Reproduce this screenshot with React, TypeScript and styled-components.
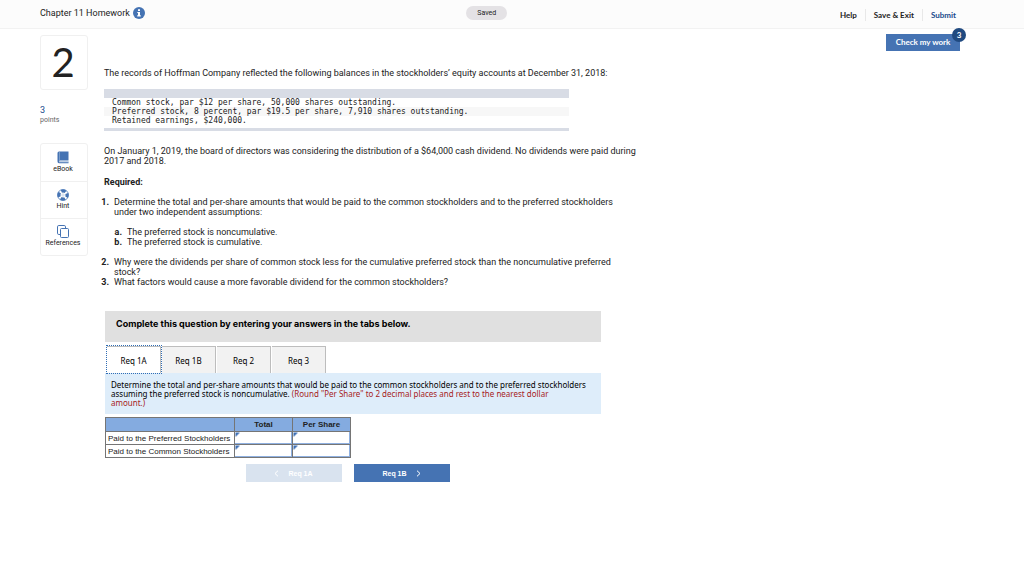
import React, { useState } from "react";
import styled, { createGlobalStyle } from "styled-components";

const GlobalStyle = createGlobalStyle`
  *, *::before, *::after { box-sizing: border-box; }
  body {
    margin: 0;
    background: #fff;
    color: #222;
    font-family: "Roboto", "Liberation Sans", sans-serif;
    font-size: 9px;
    line-height: 10px;
  }
  button { font: inherit; color: inherit; border: 0; padding: 0; cursor: pointer; }
  p, ol, pre { margin: 0; }
`;

const Header = styled.header`
  display: grid;
  grid-template-columns: 14fr auto 15fr;
  align-items: center;
  height: 29px;
  padding: 0 60px 2px 40px;
  background: #fcfcfc;
  border-bottom: 1px solid #f2f2f2;
`;
const Title = styled.h1`
  display: flex;
  align-items: center;
  gap: 3px;
  margin: 0;
  font-size: 9px;
  font-weight: 400;
`;
const InfoButton = styled.button`
  display: flex;
  background: none;
`;
const Saved = styled.span`
  width: 41px;
  border-radius: 7px;
  background: #e4e2e5;
  font-size: 7px;
  line-height: 14px;
  text-align: center;
`;
const Nav = styled.nav`
  display: flex;
  justify-content: flex-end;
  padding-top: 3px;
  font-family: "Lato", sans-serif;
`;
const NavLink = styled.a<{ $primary?: boolean }>`
  padding: 0 8px;
  border-left: 1px solid #e8e8e8;
  color: ${(p) => (p.$primary ? "#204a8b" : "#222")};
  font-size: 8px;
  font-weight: 700;
  line-height: 12px;
  text-decoration: none;
  &:first-child { border-left: 0; }
`;

const Page = styled.div`
  display: grid;
  grid-template-columns: 48px minmax(0, 1fr) auto;
  column-gap: 16px;
  padding: 5px 64px 24px 40px;
`;
const Side = styled.aside`
  display: flex;
  flex-direction: column;
  padding-top: 1px;
`;
const QuestionNumber = styled.div`
  border: 1px solid #f0f0f0;
  border-radius: 3px;
  padding-right: 2px;
  font-family: "Lato", sans-serif;
  font-size: 40px;
  line-height: 53px;
  text-align: center;
`;
const Points = styled.div`
  margin: 15px 0 18px;
  color: #666;
  font-size: 7px;
`;
const PointValue = styled.div`
  color: #204a8b;
  font-size: 9px;
`;
const Tools = styled.div`
  border: 1px solid #f0f0f0;
  border-radius: 3px;
`;
const Tool = styled.button`
  display: flex;
  flex-direction: column;
  align-items: center;
  justify-content: center;
  width: 100%;
  height: 37px;
  padding: 0 2px 1px 0;
  background: none;
  font-size: 7px;
  & + & { border-top: 1px solid #f0f0f0; }
`;

const Content = styled.main`
  max-width: 552px;
  padding-top: 34px;
`;
const Ledger = styled.div`
  max-width: 465px;
  margin: 11px 0 15px;
  border-top: 9px solid #d8dce5;
  border-bottom: 3px solid #d8dce5;
  padding-bottom: 3px;
`;
const LedgerLine = styled.pre<{ $shaded?: boolean }>`
  padding-left: 8px;
  background: ${(p) => (p.$shaded ? "#f7f7f7" : "#fff")};
  font-family: "DejaVu Sans Mono", monospace;
  font-size: 8px;
  line-height: 9px;
`;
const Required = styled.p`
  margin: 11px 0 10px;
  font-weight: 700;
`;
const List = styled.ol<{ $alpha?: boolean }>`
  margin: ${(p) => (p.$alpha ? "10px 0" : "0")};
  padding-left: ${(p) => (p.$alpha ? "13px" : "10px")};
  padding-right: ${(p) => (p.$alpha ? "0" : "24px")};
  list-style: none;
  counter-reset: item;
  & > li { counter-increment: item; }
  & > li::before {
    content: ${(p) => (p.$alpha ? 'counter(item, lower-alpha) "."' : 'counter(item) "."')};
    display: inline-block;
    width: 13px;
    margin-left: -13px;
    padding-right: 5px;
    font-weight: 700;
    text-align: right;
  }
`;

const Worksheet = styled.section`
  max-width: 496px;
  margin: 24px 0 0 1px;
  color: #000;
  font-family: "Noto Sans", sans-serif;
  font-size: 8px;
  line-height: 9px;
`;
const Banner = styled.h2`
  margin: 0 0 4px;
  padding: 8px 11px 14px;
  background: #e0e0e0;
  font-family: "Inter", sans-serif;
  font-size: 9px;
  line-height: 9px;
`;
const Tabs = styled.div`
  display: flex;
  gap: 1px;
  padding-left: 2px;
`;
const Tab = styled.button<{ $active: boolean }>`
  position: relative;
  z-index: ${(p) => (p.$active ? 1 : 0)};
  width: 54px;
  height: 27px;
  border-top: 1px solid #bdbdbd;
  border-right: 1px solid #bdbdbd;
  background: ${(p) => (p.$active ? "#fff" : "#f2f2f2")};
  outline: ${(p) => (p.$active ? "1px dotted #2f6db5" : "none")};
`;
const Instructions = styled.p`
  padding: 7px 6px;
  background: #deedfa;
  min-height: 41px;
`;
const Note = styled.span`
  color: #a61c1c;
`;
const Answers = styled.table`
  margin-top: 3px;
  border-collapse: collapse;
  color: #222;
  font-family: "Liberation Sans", sans-serif;
  font-size: 8px;
  line-height: 9px;
  th, td { height: 13px; padding: 0 2px; border: 1px solid #757575; }
  thead th { height: 14px; background: #84abe0; }
  tbody th { width: 129px; font-weight: 400; text-align: left; white-space: nowrap; }
`;
const AnswerHead = styled.th`
  width: 58px;
`;
const AnswerCell = styled.td`
  && {
    padding: 0;
    background: linear-gradient(135deg, #3f70b5 3px, transparent 3px);
  }
`;
const AnswerInput = styled.input`
  display: block;
  width: 100%;
  height: 12px;
  border: 0;
  border-right: 1px solid #8fb0e0;
  border-bottom: 1px solid #8fb0e0;
  padding: 0 4px;
  background: none;
  font: inherit;
`;
const Pager = styled.div`
  display: flex;
  justify-content: center;
  gap: 12px;
  margin-top: 6px;
  padding-right: 11px;
`;
const PagerButton = styled.button`
  display: flex;
  align-items: center;
  justify-content: center;
  gap: 9px;
  width: 96px;
  height: 18px;
  background: #4573b3;
  color: #fff;
  font-family: "Liberation Sans", sans-serif;
  font-size: 7px;
  font-weight: 700;
  &:disabled { background: #d9e3ef; }
`;

const CheckArea = styled.div`
  position: relative;
  align-self: start;
  font-family: "Lato", sans-serif;
`;
const CheckButton = styled.button`
  width: 74px;
  height: 17px;
  padding-bottom: 1px;
  background: #4573b3;
  color: #fff;
  font-size: 8px;
  font-weight: 700;
`;
const Badge = styled.span`
  position: absolute;
  top: -6px;
  right: -6px;
  width: 14px;
  border-radius: 7px;
  background: #204a80;
  color: #fff;
  font-size: 8px;
  font-weight: 700;
  line-height: 14px;
  text-align: center;
`;

const InfoIcon = () => (
  <svg width="12" height="12" viewBox="0 0 12 12" aria-hidden="true">
    <circle cx="6" cy="6" r="6" fill="#4573b3" />
    <path d="M5 2.3h2v1.6H5zM4.3 4.9H7v3.4h.8v1.1H4.2V8.3H5V6h-.7z" fill="#fff" />
  </svg>
);
const BookIcon = () => (
  <svg width="12" height="13" viewBox="0 0 12 13" aria-hidden="true">
    <path d="M2 .5h9.5v9H2.3v1h9.2v1.7H2A1.6 1.6 0 0 1 .5 10.6V2A1.5 1.5 0 0 1 2 .5z" fill="#4573b3" />
    <path d="M2.5 1v8" stroke="#8eacd3" strokeWidth=".7" />
    <path d="M2 10.8h9.5" stroke="#d5e0ef" strokeWidth=".8" />
  </svg>
);
const HintIcon = () => (
  <svg width="12" height="12" viewBox="0 0 12 12" fill="none" aria-hidden="true">
    <circle cx="6" cy="6" r="5.5" stroke="#6e95c8" strokeWidth="1" />
    <circle cx="6" cy="6" r="4" stroke="#4573b3" strokeWidth="3" strokeDasharray="4.400 1.883" strokeDashoffset="2.200" />
    <path d="M6 4v4M4 6h4" stroke="#c4d4e9" strokeWidth=".8" />
  </svg>
);
const CopyIcon = () => (
  <svg width="12" height="13" viewBox="0 0 12 13" fill="none" stroke="#4573b3" aria-hidden="true">
    <path d="M3 9.5H1.8A1.3 1.3 0 0 1 .5 8.2V1.8A1.3 1.3 0 0 1 1.8.5h5.4A1.3 1.3 0 0 1 8.5 1.8V3" />
    <path d="M4.5 3.5h6a1 1 0 0 1 1 1v7a1 1 0 0 1-1 1h-6a1 1 0 0 1-1-1v-7a1 1 0 0 1 1-1z" />
  </svg>
);
const Chevron = ({ left }: { left?: boolean }) => (
  <svg width="5" height="7" viewBox="0 0 5 7" fill="none" stroke="currentColor" aria-hidden="true">
    <path d={left ? "M4 .7 1 3.5l3 2.8" : "M1 .7l3 2.8-3 2.8"} />
  </svg>
);

const tabs = ["Req 1A", "Req 1B", "Req 2", "Req 3"];
const rows = ["Paid to the Preferred Stockholders", "Paid to the Common Stockholders"];

export default function App() {
  const [active, setActive] = useState(0);
  return (
    <>
      <GlobalStyle />
      <Header>
        <Title>
          Chapter 11 Homework
          <InfoButton aria-label="Assignment information"><InfoIcon /></InfoButton>
        </Title>
        <Saved>Saved</Saved>
        <Nav>
          <NavLink href="#help">Help</NavLink>
          <NavLink href="#exit">Save &amp; Exit</NavLink>
          <NavLink href="#submit" $primary>Submit</NavLink>
        </Nav>
      </Header>
      <Page>
        <Side>
          <QuestionNumber>2</QuestionNumber>
          <Points>
            <PointValue>3</PointValue>
            points
          </Points>
          <Tools>
            <Tool><BookIcon />eBook</Tool>
            <Tool><HintIcon />Hint</Tool>
            <Tool><CopyIcon />References</Tool>
          </Tools>
        </Side>
        <Content>
          <p>The records of Hoffman Company reflected the following balances in the stockholders’ equity accounts at December 31, 2018:</p>
          <Ledger>
            <LedgerLine>Common stock, par $12 per share, 50,000 shares outstanding.</LedgerLine>
            <LedgerLine $shaded>Preferred stock, 8 percent, par $19.5 per share, 7,910 shares outstanding.</LedgerLine>
            <LedgerLine>Retained earnings, $240,000.</LedgerLine>
          </Ledger>
          <p>On January 1, 2019, the board of directors was considering the distribution of a $64,000 cash dividend. No dividends were paid during 2017 and 2018.</p>
          <Required>Required:</Required>
          <List>
            <li>
              Determine the total and per-share amounts that would be paid to the common stockholders and to the preferred stockholders under two independent assumptions:
              <List $alpha>
                <li>The preferred stock is noncumulative.</li>
                <li>The preferred stock is cumulative.</li>
              </List>
            </li>
            <li>Why were the dividends per share of common stock less for the cumulative preferred stock than the noncumulative preferred stock?</li>
            <li>What factors would cause a more favorable dividend for the common stockholders?</li>
          </List>
          <Worksheet>
            <Banner>Complete this question by entering your answers in the tabs below.</Banner>
            <Tabs role="tablist">
              {tabs.map((label, i) => (
                <Tab key={label} role="tab" aria-selected={i === active} $active={i === active} onClick={() => setActive(i)}>
                  {label}
                </Tab>
              ))}
            </Tabs>
            <Instructions>
              Determine the total and per-share amounts that would be paid to the common stockholders and to the preferred stockholders assuming the preferred stock is noncumulative. <Note>(Round "Per Share" to 2 decimal places and rest to the nearest dollar<br />amount.)</Note>
            </Instructions>
            <Answers>
              <thead>
                <tr><th /><AnswerHead>Total</AnswerHead><AnswerHead>Per Share</AnswerHead></tr>
              </thead>
              <tbody>
                {rows.map((row) => (
                  <tr key={row}>
                    <th scope="row">{row}</th>
                    <AnswerCell><AnswerInput aria-label={`${row}, total`} /></AnswerCell>
                    <AnswerCell><AnswerInput aria-label={`${row}, per share`} /></AnswerCell>
                  </tr>
                ))}
              </tbody>
            </Answers>
            <Pager>
              <PagerButton disabled><Chevron left />Req 1A</PagerButton>
              <PagerButton>Req 1B<Chevron /></PagerButton>
            </Pager>
          </Worksheet>
        </Content>
        <CheckArea>
          <CheckButton>Check my work</CheckButton>
          <Badge>3</Badge>
        </CheckArea>
      </Page>
    </>
  );
}
